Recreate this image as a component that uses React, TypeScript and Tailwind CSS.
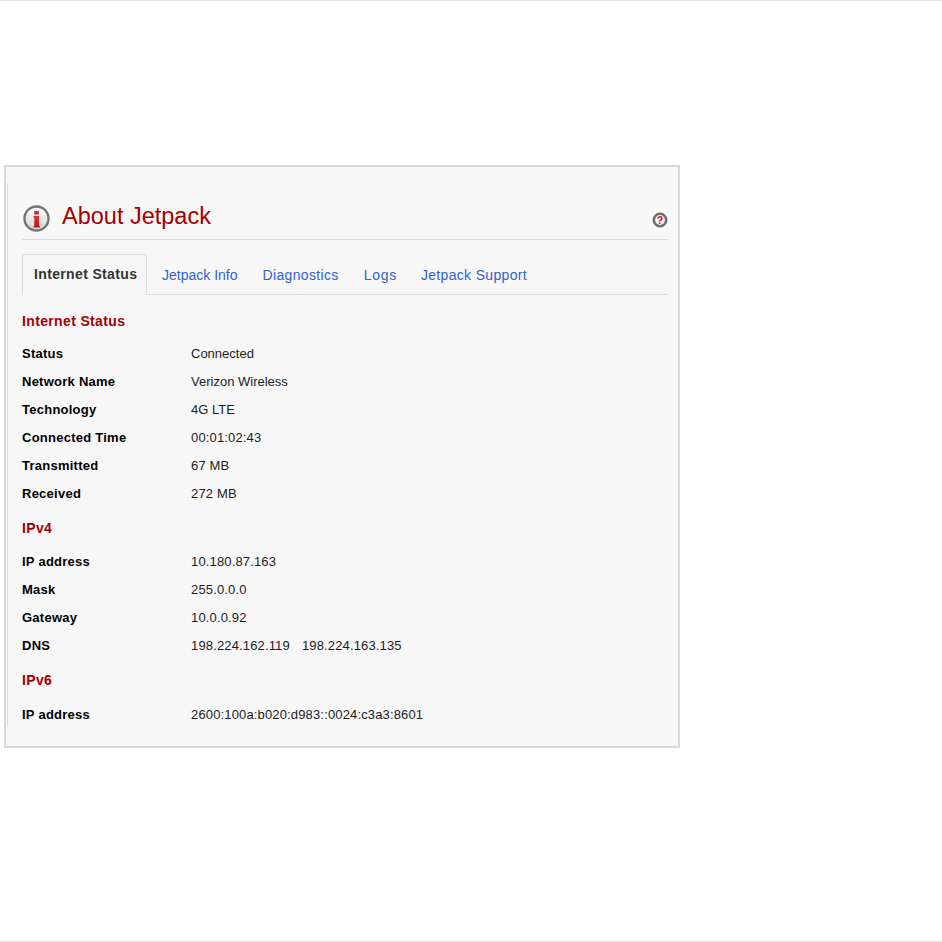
import React from "react";

const tabs = [
  { label: "Jetpack Info", className: "" },
  { label: "Diagnostics", className: "tracking-[0.35px]" },
  { label: "Logs", className: "-mr-px tracking-[0.7px]" },
  { label: "Jetpack Support", className: "tracking-[0.33px]" },
];

const Row = ({ label, children }: { label: string; children: React.ReactNode }) => (
  <div className="flex h-[28px] items-center text-[13px] leading-[28px] text-[#1c1c1c]">
    <div className="w-[169px] font-bold tracking-[0.25px] text-black">{label}</div>
    <div>{children}</div>
  </div>
);

const Num = ({ children, className = "" }: { children: React.ReactNode; className?: string }) => (
  <span className={`tracking-[0.15px] ${className}`}>{children}</span>
);

const Heading = ({ children, className }: { children: React.ReactNode; className: string }) => (
  <h3 className={`text-[14px] leading-[16px] font-bold tracking-[0.35px] text-[#a50000] ${className}`}>{children}</h3>
);

const InfoIcon = () => (
  <svg width="28" height="28" viewBox="0 0 28 28" className="mt-px ml-px">
    <defs>
      <linearGradient id="face" x1="0" y1="0" x2="0" y2="1">
        <stop offset="0" stopColor="#ffffff" />
        <stop offset="1" stopColor="#d4d4d4" />
      </linearGradient>
      <linearGradient id="mark" x1="0" y1="0" x2="0" y2="1">
        <stop offset="0" stopColor="#e0343a" />
        <stop offset="1" stopColor="#b81218" />
      </linearGradient>
    </defs>
    <circle cx="13.5" cy="13.5" r="12" fill="url(#face)" stroke="#747474" strokeWidth="2.4" />
    <rect x="11.2" y="6" width="4.6" height="3.5" fill="#d9272e" />
    <path d="M10.5 11H16v10h1v1.5h-6.5V21h.8v-8.5h-.8z" fill="url(#mark)" />
  </svg>
);

const HelpIcon = () => (
  <svg width="16" height="16" viewBox="0 0 16 16">
    <circle cx="8" cy="8" r="6.2" fill="#f4f4f4" stroke="#6f6f6f" strokeWidth="2.6" />
    <text x="8" y="11.6" textAnchor="middle" fontSize="10.5" fontWeight="700" fill="#c9151c" fontFamily="Liberation Sans, sans-serif">
      ?
    </text>
  </svg>
);

export default function App() {
  return (
    <div className="h-[942px] border-y border-[#e3e3e3] bg-white pt-[164px] pl-[4px] font-['Liberation_Sans',Arial,sans-serif]">
      <div className="flex h-[583px] w-[676px] border-2 border-[#d9d9d9] bg-[#f7f7f7]">
        <div className="mt-[16px] ml-px h-[542px] w-px bg-[#dedede]" />
        <div className="ml-[14px] w-[646px]">
          <div className="mt-[20px] flex h-[53px] items-center border-b border-[#dcdcdc] pt-[10px]">
            <InfoIcon />
            <h1 className="-mt-[4px] ml-[11px] text-[23.5px] leading-[30px] text-[#a50000]">About Jetpack</h1>
            <div className="mt-[3px] ml-auto">
              <HelpIcon />
            </div>
          </div>
          <div className="mt-[14px] flex h-[41px] items-start border-b border-[#dcdcdc]">
            <div className="h-[41px] w-[125px] rounded-t-[3px] border border-b-0 border-[#dcdcdc] bg-[#f7f7f7] pl-[11px] text-[14px] leading-[38px] font-bold tracking-[0.35px] text-[#333]">
              Internet Status
            </div>
            <div className="ml-[15px] flex gap-[25px] text-[14px] leading-[42px] text-[#2f62c9]">
              {tabs.map((tab) => (
                <span key={tab.label} className={tab.className}>
                  {tab.label}
                </span>
              ))}
            </div>
          </div>
          <Heading className="mt-[18px] mb-[11px]">Internet Status</Heading>
          <Row label="Status">Connected</Row>
          <Row label="Network Name">Verizon Wireless</Row>
          <Row label="Technology">4G LTE</Row>
          <Row label="Connected Time">
            <Num>00:01:02:43</Num>
          </Row>
          <Row label="Transmitted">
            <Num>67 MB</Num>
          </Row>
          <Row label="Received">
            <Num>272 MB</Num>
          </Row>
          <Heading className="mt-[12px] mb-[12px]">IPv4</Heading>
          <Row label="IP address">
            <Num>10.180.87.163</Num>
          </Row>
          <Row label="Mask">
            <Num>255.0.0.0</Num>
          </Row>
          <Row label="Gateway">
            <Num>10.0.0.92</Num>
          </Row>
          <Row label="DNS">
            <Num>198.224.162.119</Num>
            <Num className="ml-[12px]">198.224.163.135</Num>
          </Row>
          <Heading className="mt-[12px] mb-[13px]">IPv6</Heading>
          <Row label="IP address">
            <Num>2600:100a:b020:d983::0024:c3a3:8601</Num>
          </Row>
        </div>
      </div>
    </div>
  );
}
